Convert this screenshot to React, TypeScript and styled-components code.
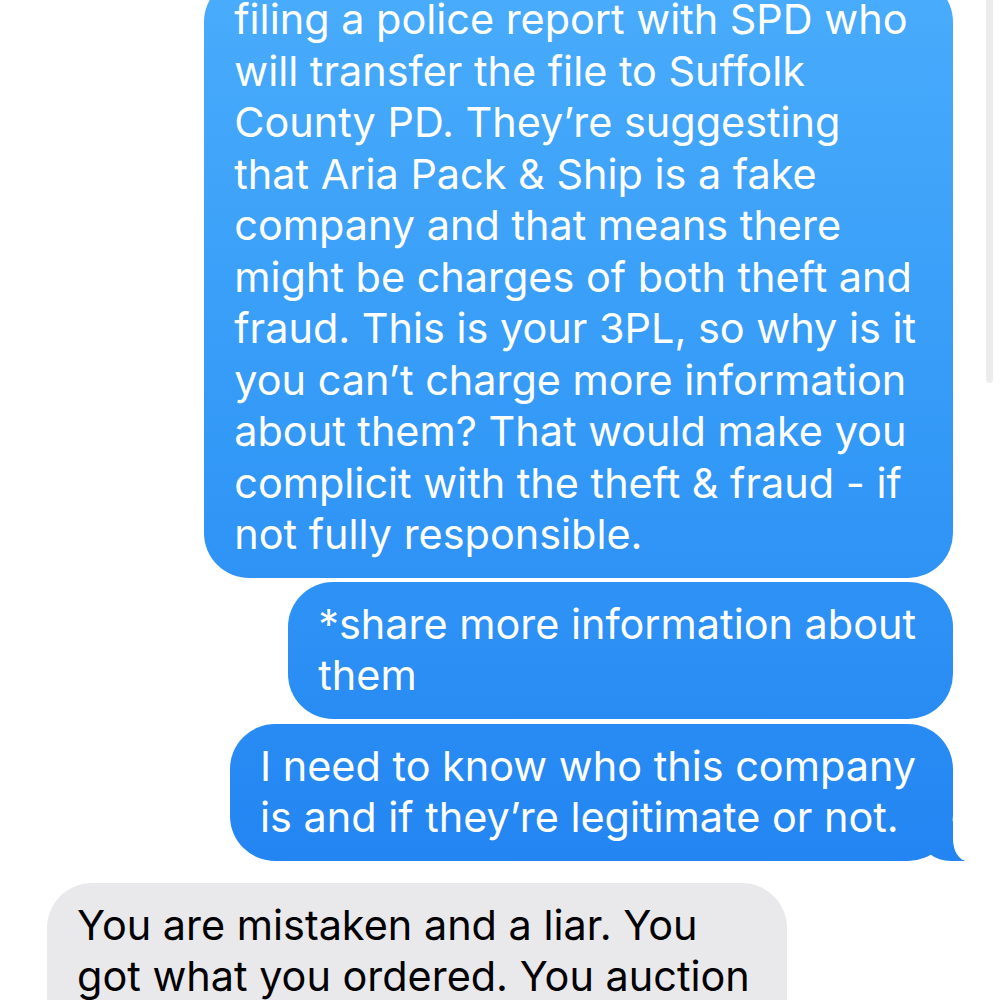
import React from 'react';
import styled, { createGlobalStyle, css } from 'styled-components';

type Sender = 'me' | 'them';

interface Message {
    id: number;
    from: Sender;
    lines: Array<string>;
    gap: number;
    tail?: boolean;
}

const messages: Array<Message> = [
    {
        id: 1,
        from: 'me',
        gap: 0,
        lines: [
            'filing a police report with SPD who',
            'will transfer the file to Suffolk',
            'County PD. They’re suggesting',
            'that Aria Pack & Ship is a fake',
            'company and that means there',
            'might be charges of both theft and',
            'fraud. This is your 3PL, so why is it',
            'you can’t charge more information',
            'about them? That would make you',
            'complicit with the theft & fraud - if',
            'not fully responsible.',
        ],
    },
    {
        id: 2,
        from: 'me',
        gap: 4,
        lines: ['*share more information about', 'them'],
    },
    {
        id: 3,
        from: 'me',
        gap: 5,
        tail: true,
        lines: ['I need to know who this company', 'is and if they’re legitimate or not.'],
    },
    {
        id: 4,
        from: 'them',
        gap: 22,
        lines: ['You are mistaken and a liar. You', 'got what you ordered. You auction', '\u00a0'],
    },
];

const blue = 'linear-gradient(180deg, #48abfb 0%, #3399f7 45%, #2283f1 90%) fixed';

const GlobalStyle = createGlobalStyle`
    html, body {
        margin: 0;
        padding: 0;
        background: #ffffff;
        overflow: hidden;
    }
    * {
        box-sizing: border-box;
    }
`;

const Screen = styled.main`
    position: relative;
    height: 1000px;
    overflow: hidden;
    background: #ffffff;
    font-family: 'Inter', 'Noto Sans', sans-serif;
    -webkit-font-smoothing: antialiased;
`;

const Thread = styled.div`
    display: flex;
    flex-direction: column;
    margin-top: -23px;
    padding: 0 47px;
`;

const Row = styled.div<{ $from: Sender; $gap: number }>`
    display: flex;
    justify-content: ${({ $from }): string => ($from === 'me' ? 'flex-end' : 'flex-start')};
    margin-top: ${({ $gap }): number => $gap}px;
`;

// little curl at the bottom right of the last bubble in a run
const myTail = css`
    &::before,
    &::after {
        content: '';
        position: absolute;
        bottom: 0;
        height: 40px;
    }
    &::before {
        right: -12px;
        width: 44px;
        background: ${blue};
        border-bottom-left-radius: 30px 24px;
    }
    &::after {
        right: -34px;
        width: 34px;
        background: #ffffff;
        border-bottom-left-radius: 14px 22px;
    }
`;

const Bubble = styled.div<{ $from: Sender; $tail?: boolean }>`
    position: relative;
    padding: 17px 37px 17px 30px;
    border-radius: 45px;
    font-size: 41.4px;
    line-height: 51.5px;
    ${({ $from }) =>
        $from === 'me'
            ? css`
                  color: #ffffff;
                  background: ${blue};
              `
            : css`
                  color: #000000;
                  background: #e9e9eb;
              `}
    ${({ $tail }) => $tail && myTail}
`;

const Line = styled.span`
    position: relative;
    z-index: 1;
    display: block;
    white-space: nowrap;
`;

const ScrollIndicator = styled.div`
    position: absolute;
    top: -10px;
    right: 7px;
    width: 7px;
    height: 393px;
    border-radius: 4px;
    background: #ececec;
`;

export default function App(): React.ReactElement {
    return (
        <Screen>
            <GlobalStyle />
            <Thread>
                {messages.map((m) => (
                    <Row key={m.id} $from={m.from} $gap={m.gap}>
                        <Bubble $from={m.from} $tail={m.tail}>
                            {m.lines.map((l, i) => (
                                <Line key={i}>{l}</Line>
                            ))}
                        </Bubble>
                    </Row>
                ))}
            </Thread>
            <ScrollIndicator />
        </Screen>
    );
}
